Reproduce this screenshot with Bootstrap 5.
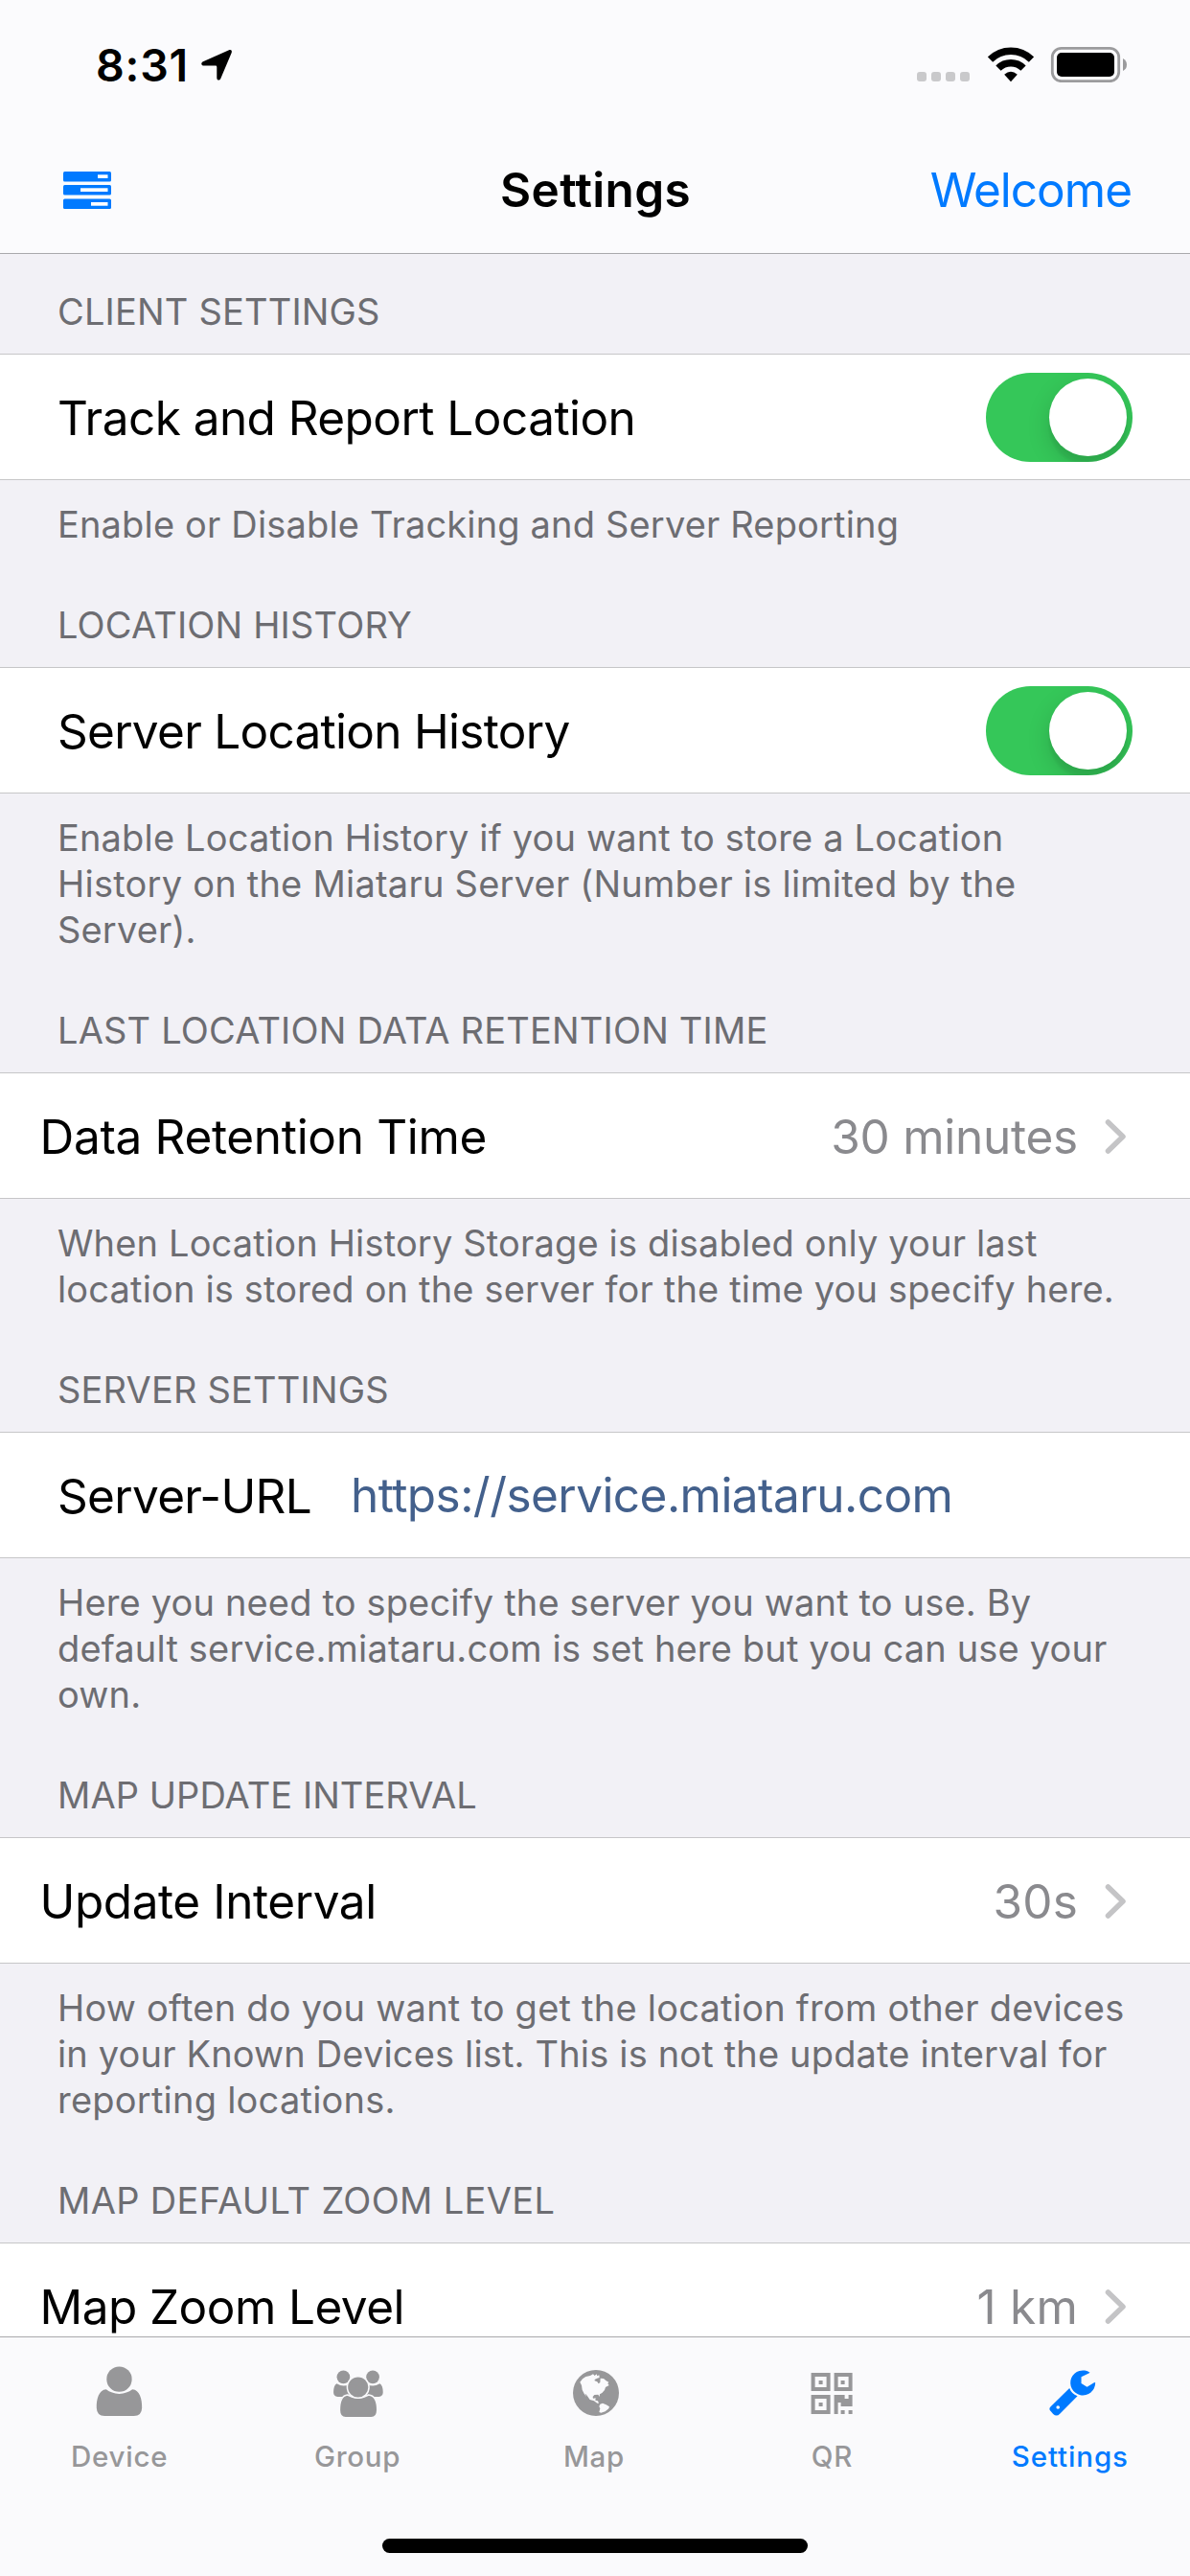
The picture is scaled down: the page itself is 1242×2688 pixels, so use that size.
<!DOCTYPE html>
<html lang="en">
<head>
<meta charset="utf-8">
<meta name="viewport" content="width=device-width, initial-scale=1">
<title>Settings</title>
<link href="https://cdn.jsdelivr.net/npm/bootstrap@5.3.0/dist/css/bootstrap.min.css" rel="stylesheet">
<style>
  body { font-family: Inter, "Liberation Sans", sans-serif; background: #f2f1f6; color: #000; font-size: 49.5px; line-height: 60px; letter-spacing: -.55px; }
  svg { display: block; flex: none; }
  .screen { width: 1242px; height: 2688px; }
  .topbar { background: #fbfbfd; border-bottom: 1px solid #a9a9ac; height: 265px; }
  .statusbar { height: 132px; padding: 38px 65px 0 100px; }
  .clock { font-size: 46.5px; font-weight: 600; letter-spacing: .8px; }
  .locate { margin: 8px 0 0 9px; }
  .status-glyph { margin-top: 10px; }
  .signal { gap: 5px; padding-top: 37px; margin-right: 19px; }
  .signal i { width: 10px; height: 10px; border-radius: 3px; background: #c9c9cb; }
  .titlebar { height: 132px; padding: 0 61px 0 66px; }
  .title-text { font-weight: 600; letter-spacing: .35px; }
  .accent { color: #007aff; }
  .welcome-link { letter-spacing: -1px; text-decoration: none; }
  .group-head, .group-foot { color: #6d6d72; font-size: 38px; line-height: 48px; letter-spacing: .16px; padding: 0 50px 0 60px; white-space: nowrap; }
  .group-head { padding-top: 57px; padding-bottom: 20px; letter-spacing: .18px; }
  .group-head.first-head { padding-top: 36px; }
  .head-tight { letter-spacing: .06px; }
  .head-wide { letter-spacing: .32px; }
  .group-foot { padding-top: 22px; }
  .line-wide { letter-spacing: .23px; }
  .cell { background: #fff; border-top: 1px solid #c6c6c8; border-bottom: 1px solid #c6c6c8; height: 132px; padding: 1px 60px 0; }
  .cell-nav { padding-left: 41.5px; }
  .label-tight { letter-spacing: -.72px; }
  .label-wide { letter-spacing: -.32px; }
  .label-mid { letter-spacing: -.42px; }
  .value { color: #8a8a8e; margin-right: 25px; letter-spacing: -.25px; }
  .value-short { letter-spacing: .2px; }
  .url-label { width: 306px; letter-spacing: -.68px; }
  .url { color: #43608c; padding-bottom: 2px; }
  .toggle { width: 153px; height: 93px; background: #35c759; padding: 6px; }
  .toggle i { width: 81px; height: 81px; background: #fff; box-shadow: 0 9px 24px rgba(0,0,0,.15), 0 9px 3px rgba(0,0,0,.06); }
  .tabbar { background: #fafafc; border-top: 1px solid #a9a9ac; height: 250px; }
  .tab-item { color: #979799; font-size: 29.5px; font-weight: 500; line-height: 36px; letter-spacing: .75px; padding-top: 27px; gap: 19px; flex: 1 1 0; }
  .tab-item.current { color: #007aff; letter-spacing: .88px; }
  .tab-item span { margin-right: 2px; }
  .tab-item .label-shift { margin: 0 0 0 1px; }
  .home-indicator { width: 444px; height: 15px; border-radius: 8px; background: #000; margin-bottom: 24px; }
</style>
</head>
<body>
<div class="screen d-flex flex-column overflow-hidden">
  <header class="topbar flex-shrink-0">
    <div class="statusbar d-flex align-items-start">
      <span class="clock">8:31</span>
      <svg class="locate" width="40" height="40" viewBox="206 46 40 40"><path d="M239 52.2 L212 64.3 C209.300 65.800 210 68.600 212.700 68.600 H225 Q226.300 68.600 226.300 70 V81 C226.300 84.300 229.300 84.300 230.300 82 L241.700 55 C242.500 52.600 241 51.500 239 52.200Z"/></svg>
      <div class="d-flex ms-auto">
        <div class="signal d-flex"><i></i><i></i><i></i><i></i></div>
        <svg class="status-glyph" width="48" height="38" viewBox="0 0 48 38">
          <g fill="none" stroke="#000" stroke-width="7.500"><path d="M2.500 14 A30.500 30.500 0 0 1 45.500 14"/><path d="M11 23.200 A18.500 18.500 0 0 1 37 23.200"/></g>
          <path d="M24 37.200 L17.200 29.800 Q24 23.800 30.800 29.800Z"/>
        </svg>
        <svg class="status-glyph ms-3" width="82" height="38" viewBox="1096 48 82 38">
          <rect x="1099.300" y="50.300" width="69.400" height="34.400" rx="9.500" fill="none" stroke="#9b9b9d" stroke-width="2.800"/>
          <rect x="1104" y="55" width="60" height="25" rx="5"/>
          <path d="M1173 61 Q1177 63 1177 67.500 T1173 74Z" fill="#9b9b9d"/>
        </svg>
      </div>
    </div>
    <nav class="titlebar row g-0 align-items-center">
      <div class="col">
        <svg width="50" height="39" viewBox="0 0 50 39"><g fill="#007aff"><rect width="50" height="10.500" rx="1.500"/><rect y="14" width="50" height="10.500" rx="1.500"/><rect y="28.500" width="50" height="10.500" rx="1.500"/></g><g fill="#fff"><rect x="36" y="3.300" width="10.500" height="3.700"/><rect x="18" y="17.300" width="28.500" height="3.700"/><rect x="29" y="32" width="17.500" height="3.700"/></g></svg>
      </div>
      <div class="col-auto title-text pe-1">Settings</div>
      <div class="col text-end"><a class="accent welcome-link" href="#">Welcome</a></div>
    </nav>
  </header>

  <main class="flex-grow-1 overflow-hidden">
    <div class="group-head first-head">CLIENT SETTINGS</div>
    <div class="cell d-flex align-items-center justify-content-between">
      <span>Track and Report Location</span>
      <div class="toggle rounded-pill d-flex justify-content-end overflow-hidden"><i class="rounded-circle"></i></div>
    </div>
    <div class="group-foot">Enable or Disable Tracking and Server Reporting</div>

    <div class="group-head">LOCATION HISTORY</div>
    <div class="cell d-flex align-items-center justify-content-between">
      <span class="label-tight">Server Location History</span>
      <div class="toggle rounded-pill d-flex justify-content-end overflow-hidden"><i class="rounded-circle"></i></div>
    </div>
    <div class="group-foot">Enable Location History if you want to store a Location<br><span class="line-wide">History on the Miataru Server (Number is limited by the</span><br>Server).</div>

    <div class="group-head">LAST LOCATION DATA RETENTION TIME</div>
    <div class="cell cell-nav d-flex align-items-center">
      <span class="label-wide">Data Retention Time</span><span class="value ms-auto">30 minutes</span>
      <svg width="32" height="40" viewBox="0 0 32 40"><path d="M6.500 5 L22 20 L6.500 35" fill="none" stroke="#c4c4c6" stroke-width="5.500" stroke-linecap="round" stroke-linejoin="round"/></svg>
    </div>
    <div class="group-foot">When Location History Storage is disabled only your last<br>location is stored on the server for the time you specify here.</div>

    <div class="group-head">SERVER SETTINGS</div>
    <div class="cell d-flex align-items-center">
      <span class="url-label">Server-URL</span><span class="url">https://service.miataru.com</span>
    </div>
    <div class="group-foot">Here you need to specify the server you want to use. By<br>default service.miataru.com is set here but you can use your<br>own.</div>

    <div class="group-head head-tight">MAP UPDATE INTERVAL</div>
    <div class="cell cell-nav d-flex align-items-center">
      <span class="label-mid">Update Interval</span><span class="value value-short ms-auto">30s</span>
      <svg width="32" height="40" viewBox="0 0 32 40"><path d="M6.500 5 L22 20 L6.500 35" fill="none" stroke="#c4c4c6" stroke-width="5.500" stroke-linecap="round" stroke-linejoin="round"/></svg>
    </div>
    <div class="group-foot"><span class="line-wide">How often do you want to get the location from other devices</span><br>in your Known Devices list. This is not the update interval for<br><span class="line-wide">reporting locations.</span></div>

    <div class="group-head head-wide">MAP DEFAULT ZOOM LEVEL</div>
    <div class="cell cell-nav d-flex align-items-center">
      <span>Map Zoom Level</span><span class="value value-short ms-auto">1 km</span>
      <svg width="32" height="40" viewBox="0 0 32 40"><path d="M6.500 5 L22 20 L6.500 35" fill="none" stroke="#c4c4c6" stroke-width="5.500" stroke-linecap="round" stroke-linejoin="round"/></svg>
    </div>
  </main>

  <footer class="tabbar flex-shrink-0 d-flex flex-column align-items-center justify-content-between">
    <div class="d-flex w-100">
      <div class="tab-item d-flex flex-column align-items-center">
        <svg width="60" height="60" viewBox="102.600 108 180 180" fill="currentColor"><circle cx="194" cy="158" r="39.500"/><path d="M153 190 Q170 203 194 204 Q218 203 235 190 C258 191 266 222 265 248 Q264 273 240 273 H148 Q124 273 123 248 C122 222 130 191 153 190Z"/></svg>
        <span class="label-shift">Device</span>
      </div>
      <div class="tab-item d-flex flex-column align-items-center">
        <svg width="60" height="60" viewBox="847.800 108 180 180" fill="currentColor">
          <circle cx="894" cy="151" r="20.500"/><circle cx="986" cy="151" r="20.500"/>
          <path d="M873 172 Q894 184 912 174 L918 213 H876 Q863 212 863 199 Q863 178 873 172Z M1008 172 Q987 184 969 174 L963 213 H1005 Q1018 212 1018 199 Q1018 178 1008 172Z"/>
          <g stroke="#fafafc" stroke-width="4.500"><path d="M907 207 Q940 226 973 207 C996 209 1000 232 1000 255 Q1000 278 981 278 H901 Q882 278 882 255 C882 232 885 209 907 207Z"/><circle cx="940" cy="183" r="34"/></g>
        </svg>
        <span class="label-shift">Group</span>
      </div>
      <div class="tab-item d-flex flex-column align-items-center">
        <svg width="60" height="60" viewBox="3 3 180 180"><circle cx="96" cy="96" r="72" fill="currentColor"/><path fill="#fafafc" d="M46 62 L54 52 64 45 78 42 87 37 92 42 98 37 100 43 106 40 107 48 100 50 92 54 92 58 100 61 104 67 109 63 110 50 120 51 128 58 136 62 133 67 137 72 126 78 123 87 115 96 108 100 107 108 103 101 91 102 86 108 87 113 95 112 94 119 102 121 105 128 100 128 90 121 77 117 66 101 62 98 66 108 59 98 53 86 51 72Z M109 131 L117 128 128 133 138 139 136 145 125 154 112 158 106 156 109 145 106 138Z"/></svg>
        <span>Map</span>
      </div>
      <div class="tab-item d-flex flex-column align-items-center">
        <svg width="60" height="60" viewBox="838.200 108 180 180" fill="currentColor"><path fill-rule="evenodd" d="M861 138H921V195H861Z M873 150V183H909V150Z M885 162H897V174H885Z M933 138H990V195H933Z M945 150V183H978V150Z M954 162H966V174H954Z M861 207H921V267H861Z M873 219V255H909V219Z M885 231H897V243H885Z"/><path d="M933 207H966V219H978V207H990V243H954V231H945V267H933Z M954 255H966V267H954Z M978 255H990V267H978Z"/></svg>
        <span>QR</span>
      </div>
      <div class="tab-item current d-flex flex-column align-items-center">
        <svg width="60" height="60" viewBox="203.400 258 180 180" fill="currentColor"><path d="M352 287 A39 39 0 1 0 369 319 Q368 317 365 319 L343 332 L325 321 L325 301 L350 289Z"/><path d="M288 336 Q294 353 313 361 L258 416 Q248 427 237 417 L230 409 Q221 401 230 393Z"/><circle cx="252" cy="396" r="5.500" fill="#fafafc"/></svg>
        <span>Settings</span>
      </div>
    </div>
    <div class="home-indicator"></div>
  </footer>
</div>
<script src="https://cdn.jsdelivr.net/npm/bootstrap@5.3.0/dist/js/bootstrap.bundle.min.js"></script>
</body>
</html>
